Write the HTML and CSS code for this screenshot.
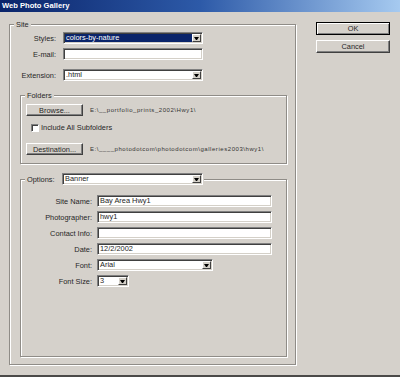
FILE: index.html
```html
<!DOCTYPE html>
<html>
<head>
<meta charset="utf-8">
<title>Web Photo Gallery</title>
<link rel="stylesheet" href="styles.css">
</head>
<body>
<div class="window">
  <div class="titlebar">Web Photo Gallery</div>
  <div class="content">
    <div class="group site">
      <div class="legend">Site</div>
      <div class="row r-styles"><span class="lbl">Styles:</span><div class="select w140"><span class="val selected">colors-by-nature</span><span class="arrow"></span></div></div>
      <div class="row r-email"><span class="lbl">E-mail:</span><div class="input w140"></div></div>
      <div class="row r-ext"><span class="lbl">Extension:</span><div class="select w140"><span class="val">.html</span><span class="arrow"></span></div></div>

      <div class="group folders">
        <div class="legend">Folders</div>
        <div class="frow f1"><div class="btn">Browse...</div><span class="path">E:\__portfolio_prints_2002\Hwy1\</span></div>
        <div class="frow chk"><span class="checkbox"></span><span class="chklbl">Include All Subfolders</span></div>
        <div class="frow f2"><div class="btn">Destination...</div><span class="path">E:\____photodotcom\photodotcom\galleries2003\hwy1\</span></div>
      </div>

      <div class="group options">
        <div class="legend olegend"><span class="olbl">Options:</span><div class="select w141"><span class="val">Banner</span><span class="arrow"></span></div></div>
        <div class="orow first"><span class="lbl">Site Name:</span><div class="input w175"><span class="val">Bay Area Hwy1</span></div></div>
        <div class="orow"><span class="lbl">Photographer:</span><div class="input w175"><span class="val">hwy1</span></div></div>
        <div class="orow"><span class="lbl">Contact Info:</span><div class="input w175"></div></div>
        <div class="orow"><span class="lbl">Date:</span><div class="input w175"><span class="val">12/2/2002</span></div></div>
        <div class="orow tall"><span class="lbl">Font:</span><div class="select w116"><span class="val">Arial</span><span class="arrow"></span></div></div>
        <div class="orow"><span class="lbl">Font Size:</span><div class="select w32"><span class="val">3</span><span class="arrow"></span></div></div>
      </div>
    </div>

    <div class="buttons">
      <div class="dbtn default">OK</div>
      <div class="dbtn">Cancel</div>
    </div>
  </div>
</div>
</body>
</html>
```

FILE: styles.css
```css
html, body {
  margin: 0;
  padding: 0;
}
body {
  background: #d5d1cb;
  font-family: "Liberation Sans", Arial, sans-serif;
  font-size: 7.4px;
  color: #262626;
}
.window {
  width: 400px;
  height: 377px;
  box-sizing: border-box;
  border-bottom: 2px solid #4b4a48;
  display: flex;
  flex-direction: column;
  overflow: hidden;
}
.titlebar {
  height: 12px;
  line-height: 12px;
  padding-left: 2px;
  background: linear-gradient(to right, #0a246a 0%, #2d5aa8 50%, #a6caf0 100%);
  color: #fff;
  font-weight: bold;
  font-size: 7.6px;
}
.content {
  display: flex;
  align-items: flex-start;
  padding-top: 12px;
}
.group {
  box-sizing: border-box;
  border: 1px solid #8f8c87;
  box-shadow: 1px 1px 0 #fff, inset 1px 1px 0 #fff;
  display: flex;
  flex-direction: column;
  align-items: flex-start;
}
.legend {
  background: #d5d1cb;
  height: 9px;
  line-height: 9px;
  margin: -5px 0 0 4px;
  padding: 0 2px;
}
.site {
  margin-left: 9px;
  width: 287px;
  height: 341px;
}
.row, .frow, .orow {
  display: flex;
  align-items: center;
}
.row { height: 12px; }
.site > .row .lbl {
  width: 46px;
  text-align: right;
  margin-right: 7px;
}
.r-styles { margin-top: 3px; }
.r-email { margin-top: 4px; }
.r-ext { margin-top: 9px; }

.input, .select {
  box-sizing: border-box;
  height: 12px;
  background: #fff;
  border: 1px solid;
  border-color: #808080 #fff #fff #808080;
  padding: 1px;
  box-shadow: inset 1px 1px 0 #404040, inset -1px -1px 0 #d4d0c8;
  display: flex;
  align-items: stretch;
}
.val {
  flex: 1;
  padding-left: 1px;
  line-height: 8px;
  white-space: nowrap;
  overflow: hidden;
}
.val.selected {
  background: #0a246a;
  color: #fff;
}
.arrow {
  box-sizing: border-box;
  width: 9px;
  background: #d4d0c8;
  border: 1px solid;
  border-color: #fff #404040 #404040 #fff;
  display: flex;
  align-items: center;
  justify-content: center;
}
.arrow::after {
  content: "";
  width: 1px;
  height: 0;
  border-left: 2px solid transparent;
  border-right: 2px solid transparent;
  border-top: 3px solid #000;
}
.w140 { width: 140px; }
.w141 { width: 141px; }
.w175 { width: 175px; }
.w116 { width: 116px; }
.w32 { width: 32px; }

.folders {
  margin: 14px 0 0 10px;
  width: 267px;
  height: 69px;
}
.btn {
  box-sizing: border-box;
  width: 57px;
  height: 12px;
  border: 1px solid;
  border-color: #fff #404040 #404040 #fff;
  box-shadow: inset -1px -1px 0 #808080;
  display: flex;
  align-items: center;
  justify-content: center;
}
.f1 { margin: 4px 0 0 5px; }
.f2 { margin: 11px 0 0 5px; }
.path {
  margin-left: 7px;
  font-size: 6px;
  letter-spacing: 0.55px;
  color: #333;
}
.chk { margin: 7px 0 0 10px; }
.checkbox {
  box-sizing: border-box;
  width: 8px;
  height: 8px;
  background: #fff;
  border: 1px solid;
  border-color: #808080 #fff #fff #808080;
  box-shadow: inset 1px 1px 0 #404040;
}
.chklbl { margin-left: 2px; }

.options {
  margin: 15px 0 0 10px;
  width: 267px;
  height: 178px;
}
.olegend {
  display: flex;
  align-items: center;
  height: 12px;
  margin-top: -7px;
  padding: 0 1px 0 2px;
}
.olbl { width: 35px; }
.orow { height: 12px; margin-top: 4px; }
.orow.first { margin-top: 10px; }
.orow .lbl {
  width: 71px;
  text-align: right;
  margin-right: 5px;
}

.buttons {
  margin: -2px 0 0 20px;
  display: flex;
  flex-direction: column;
  gap: 5px;
}
.dbtn {
  box-sizing: border-box;
  width: 74px;
  height: 13px;
  border: 1px solid;
  border-color: #fff #404040 #404040 #fff;
  box-shadow: inset -1px -1px 0 #808080;
  display: flex;
  align-items: center;
  justify-content: center;
}
.dbtn.default {
  border-color: #000;
  box-shadow: inset 1px 1px 0 #fff, inset -1px -1px 0 #808080;
}
```
